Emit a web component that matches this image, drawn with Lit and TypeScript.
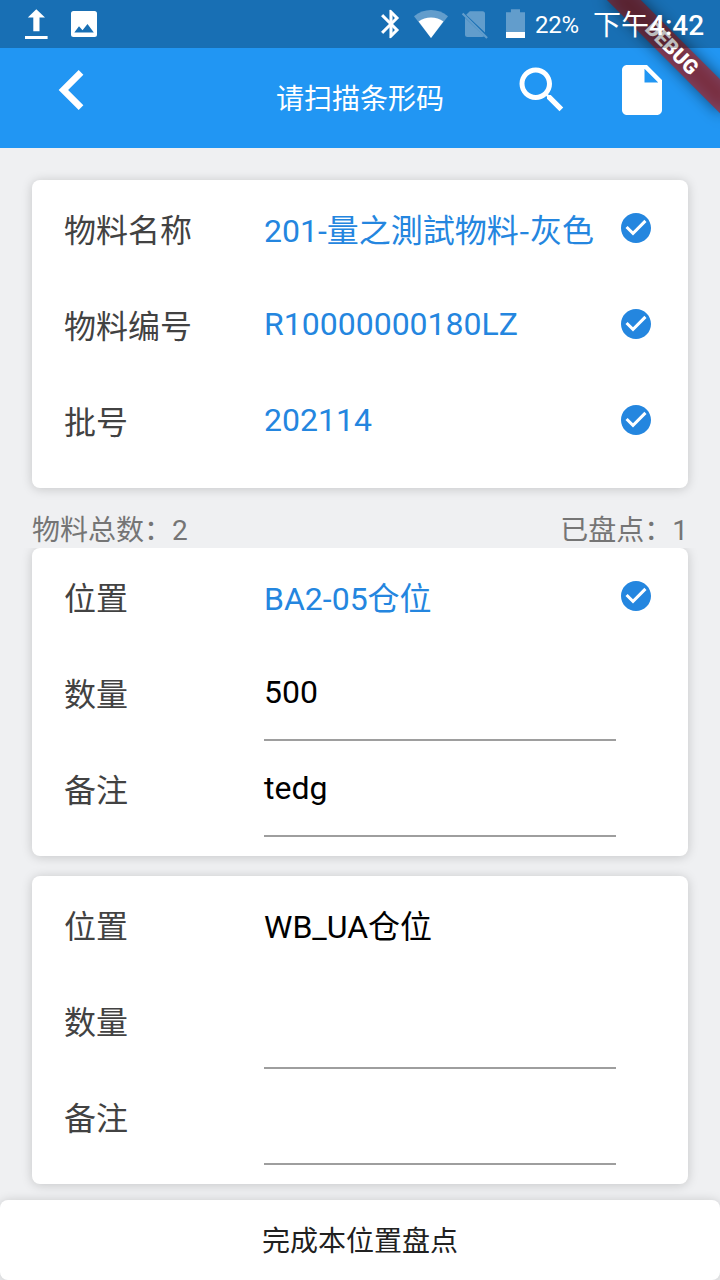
import { LitElement, html, css, svg, nothing } from "lit";
import { customElement, property } from "lit/decorators.js";

const PATHS = {
  back: "M15.41 7.41L14 6l-6 6 6 6 1.41-1.41L10.83 12z",
  search:
    "M15.5 14h-.79l-.28-.27C15.41 12.59 16 11.11 16 9.5 16 5.91 13.09 3 9.5 3S3 5.91 3 9.5 5.91 16 9.5 16c1.61 0 3.09-.59 4.23-1.57l.27.28v.79l5 4.99L20.49 19l-4.99-5zm-6 0C7.01 14 5 11.99 5 9.5S7.01 5 9.5 5 14 7.01 14 9.5 11.99 14 9.5 14z",
  file: "M6 2c-1.1 0-1.99.9-1.99 2L4 20c0 1.1.89 2 1.99 2H18c1.1 0 2-.9 2-2V8l-6-6H6zm7 7V3.5L18.5 9H13z",
  check:
    "M12 2C6.48 2 2 6.48 2 12s4.48 10 10 10 10-4.48 10-10S17.52 2 12 2zm-2 15l-5-5 1.41-1.41L10 14.17l7.59-7.59L19 8l-9 9z",
};

const icon = (name: keyof typeof PATHS, cls: string) =>
  html`<svg class=${cls} viewBox="0 0 24 24" fill="currentColor"><path d=${PATHS[name]}></path></svg>`;

// A hyphen between two ideographs takes the wider glyph of the CJK face.
const withCjkHyphens = (text: string) =>
  text
    .split(/(?<=[\u4e00-\u9fff])(-)(?=[\u4e00-\u9fff])/)
    .map((part) => (part === "-" ? html`<span class="hyphen">-</span>` : part));

interface Field {
  label: string;
  value: string;
  kind: "done" | "plain" | "input";
}

@customElement("field-card")
export class FieldCard extends LitElement {
  @property({ attribute: false }) fields: Field[] = [];

  static styles = css`
    :host {
      display: block;
      box-sizing: border-box;
      height: 308px;
      padding: 0 32px 20px;
      background: #fff;
      border-radius: 8px;
      box-shadow: 0 1px 11px rgba(0, 0, 0, 0.18);
      font-size: 32px;
      line-height: 48px;
    }
    .row {
      display: grid;
      grid-template-columns: 200px 352px 1fr;
      grid-template-rows: 96px;
      height: 96px;
      align-items: center;
    }
    .label {
      color: #424242;
      padding-top: 6px;
    }
    .value {
      color: #000;
      white-space: nowrap;
    }
    .hyphen {
      font-family: "Noto Sans CJK SC", sans-serif;
      line-height: 0;
    }
    .cjk {
      padding-top: 6px;
    }
    .done {
      color: #2486df;
    }
    .input {
      align-self: start;
      display: flex;
      align-items: center;
      box-sizing: border-box;
      height: 97px;
      padding-top: 1px;
      border-bottom: 2px solid #9e9e9e;
    }
    .check {
      width: 36px;
      height: 36px;
      margin-left: 2px;
      color: #2486df;
    }
  `;

  render() {
    return this.fields.map((f) => {
      const cjk = /[\u4e00-\u9fff]/.test(f.value) ? "cjk" : "";
      return html`<div class="row">
        <div class="label">${f.label}</div>
        <div class="value ${f.kind} ${cjk}">${cjk ? html`<span>${withCjkHyphens(f.value)}</span>` : f.value}</div>
        ${f.kind === "done" ? icon("check", "check") : nothing}
      </div>`;
    });
  }
}

@customElement("status-bar")
export class StatusBar extends LitElement {
  static styles = css`
    :host {
      display: flex;
      height: 48px;
      color: #fff;
      background: rgba(0, 0, 0, 0.26);
    }
    svg {
      flex: none;
      display: block;
      height: 48px;
    }
    .left {
      width: 110px;
    }
    .right {
      width: 170px;
      margin-left: 250px;
    }
    .pct {
      width: 59px;
      padding-left: 5px;
      box-sizing: border-box;
      font-size: 24px;
      line-height: 50px;
      letter-spacing: -0.2px;
    }
    .time {
      padding-left: 4px;
      font-size: 28px;
      line-height: 51px;
      font-weight: 500;
      white-space: nowrap;
    }
    .half {
      font-weight: 400;
    }
  `;

  render() {
    return html`
      <svg class="left" viewBox="0 0 110 48" fill="#fff">
        <path d="M36.3 9.3L45 17.5H39.5V31.2H33.3V17.5H27.8zM25 36h22.6v3H25z" />
        <path
          fill-rule="evenodd"
          d="M73.5 11h21q2.5 0 2.5 2.5v21q0 2.5-2.5 2.5h-21q-2.5 0-2.5-2.5v-21q0-2.5 2.5-2.5zM74.3 32.6H93.8L87.5 24l-5 6.2-3.5-4z"
        />
      </svg>
      <svg class="right" viewBox="360 0 170 48" fill="#fff">
        ${svg`
        <path transform="translate(374.2 7.2) scale(1.4)" d="M17.71 7.71L12 2h-1v7.59L6.41 5 5 6.41 10.59 12 5 17.59 6.41 19 11 14.41V22h1l5.71-5.71-4.3-4.29 4.3-4.29zM13 5.83l1.88 1.88L13 9.59V5.83zm1.88 10.46L13 18.17v-3.76l1.88 1.88z" stroke="#fff" stroke-width=".2"/>
        <path opacity=".32" d="M431 38L414 16.3Q421.5 10 431 10t17 6.3z"/>
        <path d="M431 38L418.6 21.5Q424 17.4 431 17.4t12.4 4.1z"/>
        <g opacity=".32">
          <path d="M469.8 11.2H482.5q2.5 0 2.5 2.5V32.5L466.2 14.8zM465 17.8L484.2 36.2Q483.5 37 482 37H467.5q-2.5 0-2.5-2.5z"/>
          <path d="M463.3 12.8L487.8 37.3 486.3 38.8 461.8 14.3z"/>
          <path d="M510.9 9.2H520v3H525V32H506V12.2h4.9z"/>
        </g>
        <path d="M506 32h19v6h-19z"/>`}
      </svg>
      <div class="pct">22%</div>
      <div class="time"><span class="half">下午</span>4:42</div>
    `;
  }
}

@customElement("app-root")
export class AppRoot extends LitElement {
  static styles = css`
    :host {
      display: flex;
      flex-direction: column;
      position: relative;
      width: 720px;
      height: 1280px;
      overflow: hidden;
      background: #eff0f2;
      font-family: Roboto, "Noto Sans CJK SC", sans-serif;
    }
    .bar {
      flex: none;
      display: grid;
      grid-template-columns: 260px 200px 1fr;
      box-sizing: border-box;
      height: 148px;
      padding-top: 48px;
      background: #2196f3;
      color: #fff;
    }
    .back {
      width: 80px;
      height: 80px;
      margin: 2px 0 0 32px;
    }
    .title {
      font-size: 28px;
      line-height: 104px;
      text-align: center;
    }
    .actions {
      display: flex;
      gap: 40px;
      padding: 12px 0 0 52px;
    }
    .action {
      width: 60px;
      height: 60px;
    }
    .top {
      flex: none;
      padding: 32px 32px 0;
    }
    .totals {
      flex: none;
      display: flex;
      justify-content: space-between;
      box-sizing: border-box;
      height: 60px;
      padding: 12px 32px 0;
      font-size: 28px;
      line-height: 61px;
      color: #757575;
    }
    .list {
      flex: 1;
      display: flex;
      flex-direction: column;
      gap: 20px;
      padding: 0 32px;
      overflow: hidden;
    }
    .finish {
      flex: none;
      height: 80px;
      border-radius: 8px;
      background: #fff;
      box-shadow: 0 1px 11px rgba(0, 0, 0, 0.18);
      color: #212121;
      font-size: 28px;
      line-height: 84px;
      text-align: center;
      z-index: 1;
    }
    .corner {
      position: absolute;
      top: 0;
      right: 0;
      width: 160px;
      height: 148px;
      overflow: hidden;
    }
    .ribbon,
    .shade {
      position: absolute;
      top: 56px;
      left: 80px;
      width: 160px;
      height: 24px;
      transform-origin: 80px -56px;
      transform: rotate(45deg);
    }
    .shade {
      background: rgba(0, 0, 0, 0.5);
      filter: blur(7.5px);
    }
    .ribbon {
      background: rgba(183, 28, 28, 0.627);
      color: #fff;
      font-size: 20.4px;
      font-weight: 900;
      line-height: 24px;
      text-align: center;
    }
    .status {
      position: absolute;
      top: 0;
      left: 0;
      width: 720px;
    }
  `;

  render() {
    return html`
      <header class="bar">
        ${icon("back", "back")}
        <div class="title">请扫描条形码</div>
        <div class="actions">${icon("search", "action")}${icon("file", "action")}</div>
      </header>
      <section class="top">
        <field-card
          .fields=${[
            { label: "物料名称", value: "201-量之測試物料-灰色", kind: "done" },
            { label: "物料编号", value: "R10000000180LZ", kind: "done" },
            { label: "批号", value: "202114", kind: "done" },
          ]}
        ></field-card>
      </section>
      <div class="totals"><span>物料总数：2</span><span>已盘点：1</span></div>
      <main class="list">
        <field-card
          .fields=${[
            { label: "位置", value: "BA2-05仓位", kind: "done" },
            { label: "数量", value: "500", kind: "input" },
            { label: "备注", value: "tedg", kind: "input" },
          ]}
        ></field-card>
        <field-card
          .fields=${[
            { label: "位置", value: "WB_UA仓位", kind: "plain" },
            { label: "数量", value: "", kind: "input" },
            { label: "备注", value: "", kind: "input" },
          ]}
        ></field-card>
      </main>
      <div class="finish">完成本位置盘点</div>
      <div class="corner">
        <div class="shade"></div>
        <div class="ribbon">DEBUG</div>
      </div>
      <status-bar class="status"></status-bar>
    `;
  }
}
